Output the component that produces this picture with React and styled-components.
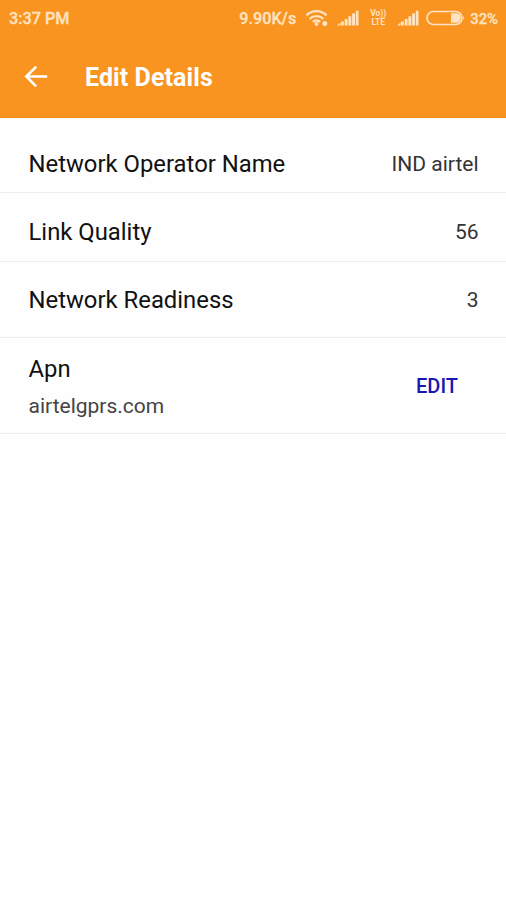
import React from 'react'
import styled, { createGlobalStyle } from 'styled-components';

const theme = {
    orange: '#f8941f',
    status: '#ffe3c2',
    link: '#1a16b4',
    line: '#ededed',
}

const GlobalStyle = createGlobalStyle`
    body{
        margin:0;
        background:#fefefe;
        font-family: Roboto, sans-serif;
    }
`

const Header = styled.header`
    height:118px;
    background: ${theme.orange};
    box-shadow: inset 0 -1px 0 #ee8b18;
`

const StatusBar = styled.div`
    height:36px;
    display:flex;
    align-items:center;
    justify-content:space-between;
    padding:1px 8px 0 9px;
    box-sizing:border-box;
    color: ${theme.status};
    font-weight:500;
`

const StatusText = styled.span`
    font-size: ${props => props.$size}px;
    margin-left: ${props => props.$left || 0}px;
    line-height:20px;
    white-space:nowrap;
    -webkit-text-stroke: 0.3px ${theme.status};
`

const StatusIcons = styled.div`
    display:flex;
    align-items:center;
`

const StatusSvg = styled.svg`
    display:block;
    margin-left: ${props => props.$left}px;
    margin-bottom:2px;
    fill: ${theme.status};
`

const Volte = styled.div`
    width:18px;
    margin-left:10px;
    margin-bottom:1px;
    display:flex;
    flex-direction:column;
    align-items:center;
    font-size:8.5px;
    font-weight:700;
    line-height:9px;
    white-space:nowrap;
`

const Toolbar = styled.div`
    height:82px;
    display:flex;
    align-items:center;
    padding-left:24px;
`

const BackButton = styled.button`
    width:24px;
    height:24px;
    padding:0;
    border:none;
    background:none;
    margin-right:37px;
`

const BackSvg = styled.svg`
    display:block;
    fill:none;
    stroke:white;
    stroke-width:2.6;
`

const Title = styled.h1`
    margin:0;
    padding-top:1px;
    font-size:25px;
    font-weight:700;
    letter-spacing:0.08px;
    line-height:28px;
    color:white;
`

const Row = styled.div`
    display:flex;
    justify-content:space-between;
    align-items:flex-start;
    padding: ${props => props.$top}px 27.5px ${props => props.$bottom}px 28.5px;
    border-bottom:1px solid ${theme.line};
`

const Label = styled.div`
    font-size:23.85px;
    line-height:28px;
    color:#111;
`

const Value = styled.div`
    font-size:21px;
    line-height:28px;
    color:#333;
`

const SubLabel = styled.div`
    margin-top:9px;
    margin-bottom:1px;
    font-size:21px;
    line-height:28px;
    color:#444;
`

const EditButton = styled.button`
    margin:17px 20.5px 0 0;
    padding:0;
    border:none;
    background:none;
    font-family:inherit;
    font-size:20px;
    font-weight:500;
    line-height:28px;
    color: ${theme.link};
`

const details = [
    { label: 'Network Operator Name', value: 'IND airtel', top: 32, bottom: 14 },
    { label: 'Link Quality', value: '56', top: 25, bottom: 15 },
    { label: 'Network Readiness', value: '3', top: 24, bottom: 23 },
]

function Signal({ left }) {
    return (
        <StatusSvg $left={left} width="22" height="16" viewBox="0 0 22 16">
            <path d="M0 15.5L3.5 12.5V15.5Z" />
            <rect x="4" y="11.5" width="2.9" height="4" />
            <rect x="7.7" y="9" width="2.9" height="6.5" />
            <rect x="11.4" y="6.2" width="2.9" height="9.3" />
            <rect x="15.1" y="3.4" width="2.9" height="12.1" />
            <rect x="18.8" y="0.8" width="2.7" height="14.7" />
        </StatusSvg>
    )
}

function Wifi() {
    return (
        <StatusSvg $left={9} width="24" height="18" viewBox="0 0 24 18">
            <g fill="none" stroke={theme.status} strokeWidth="2.3">
                <path d="M1.4 6.4C7 0.8 16 0.8 21.6 6.4" />
                <path d="M4.6 9.8C8.4 6.2 14.6 6.2 18.4 9.8" />
                <path d="M7.8 12.9C9.8 11 13.2 11 15.2 12.9" />
            </g>
            <circle cx="11.5" cy="15" r="2" />
            <circle cx="19.8" cy="14.4" r="2.5" />
        </StatusSvg>
    )
}

function Battery() {
    return (
        <StatusSvg $left={7} width="39" height="16" viewBox="0 0 39 16">
            <rect x="1" y="1.5" width="35" height="13" rx="6.5" fill="none" stroke={theme.status} strokeWidth="1.7" />
            <path d="M25 3.2H30A4.8 4.8 0 0 1 30 12.8H25Z" />
            <path d="M37 5.5Q38.8 8 37 10.5Z" />
        </StatusSvg>
    )
}

function App() {
    return (
        <>
            <GlobalStyle />

            <Header>
                {/* STATUS BAR */}
                <StatusBar>
                    <StatusText $size={16.2}>3:37 PM</StatusText>
                    <StatusIcons>
                        <StatusText $size={16.2}>9.90K/s</StatusText>
                        <Wifi />
                        <Signal left={8} />
                        <Volte>
                            <span>Vo))</span>
                            <span>LTE</span>
                        </Volte>
                        <Signal left={10} />
                        <Battery />
                        <StatusText $size={14.8} $left={5}>32%</StatusText>
                    </StatusIcons>
                </StatusBar>

                {/* TOOLBAR */}
                <Toolbar>
                    <BackButton aria-label="Back">
                        <BackSvg width="24" height="24" viewBox="0 0 24 24">
                            <path d="M23.2 11.5H2.5M12.2 1.6L2.3 11.5L12.2 21.4" />
                        </BackSvg>
                    </BackButton>
                    <Title>Edit Details</Title>
                </Toolbar>
            </Header>

            {/* NETWORK INFO */}
            {details.map(item => (
                <Row key={item.label} $top={item.top} $bottom={item.bottom}>
                    <Label>{item.label}</Label>
                    <Value>{item.value}</Value>
                </Row>
            ))}

            {/* APN */}
            <Row $top={17} $bottom={12}>
                <div>
                    <Label>Apn</Label>
                    <SubLabel>airtelgprs.com</SubLabel>
                </div>
                <EditButton>EDIT</EditButton>
            </Row>
        </>
    )
}

export default App
